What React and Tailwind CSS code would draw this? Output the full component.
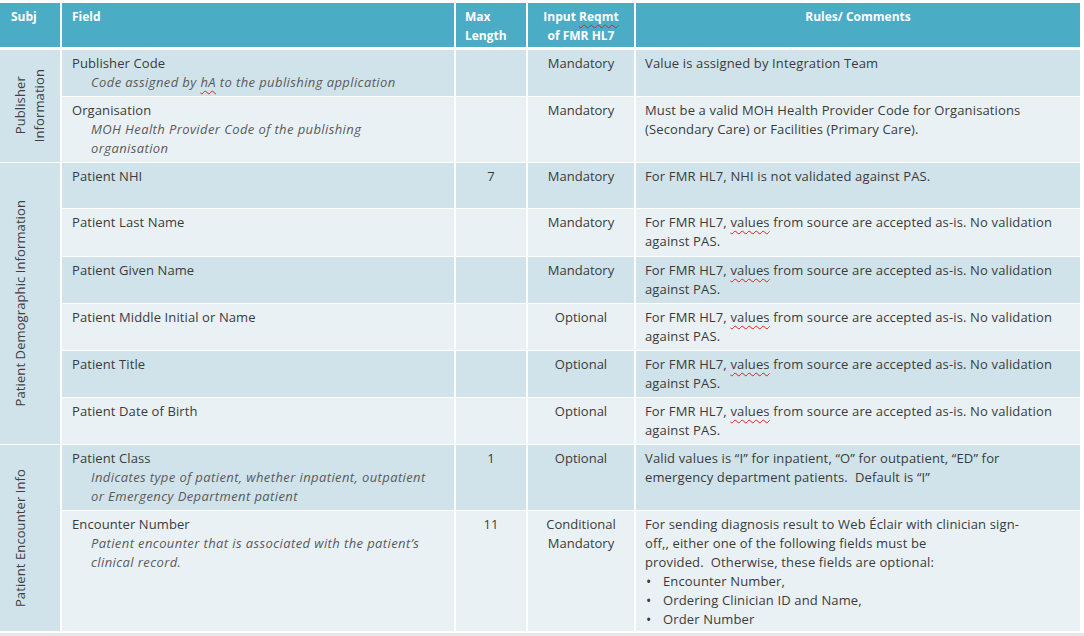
import React from "react";

const DARK = "bg-[#d0e3ea]";
const LIGHT = "bg-[#e9f1f5]";

const Squiggle = ({ children }) => (
  <span className="underline decoration-wavy decoration-[#e02020] decoration-[1px] underline-offset-[3px]">
    {children}
  </span>
);

const rules = (
  <>
    For FMR HL7, <Squiggle>values</Squiggle> from source are accepted as-is. No validation
    <br />
    against PAS.
  </>
);

const rows = [
  {
    field: "Publisher Code",
    desc: (
      <>
        Code assigned by <Squiggle>hA</Squiggle> to the publishing application
      </>
    ),
    max: "",
    req: "Mandatory",
    rules: "Value is assigned by Integration Team",
  },
  {
    field: "Organisation",
    desc: (
      <>
        MOH Health Provider Code of the publishing
        <br />
        organisation
      </>
    ),
    max: "",
    req: "Mandatory",
    rules: (
      <>
        Must be a valid MOH Health Provider Code for Organisations
        <br />
        (Secondary Care) or Facilities (Primary Care).
      </>
    ),
  },
  { field: "Patient NHI", max: "7", req: "Mandatory", rules: "For FMR HL7, NHI is not validated against PAS." },
  { field: "Patient Last Name", max: "", req: "Mandatory", rules },
  { field: "Patient Given Name", max: "", req: "Mandatory", rules },
  { field: "Patient Middle Initial or Name", max: "", req: "Optional", rules },
  { field: "Patient Title", max: "", req: "Optional", rules },
  { field: "Patient Date of Birth", max: "", req: "Optional", rules },
  {
    field: "Patient Class",
    desc: (
      <>
        Indicates type of patient, whether inpatient, outpatient
        <br />
        or Emergency Department patient
      </>
    ),
    max: "1",
    req: "Optional",
    rules: (
      <>
        Valid values is “I” for inpatient, “O” for outpatient, “ED” for
        <br />
        emergency department patients.&nbsp; Default is “I”
      </>
    ),
  },
  {
    field: "Encounter Number",
    desc: (
      <>
        Patient encounter that is associated with the patient’s
        <br />
        clinical record.
      </>
    ),
    max: "11",
    req: (
      <>
        Conditional
        <br />
        Mandatory
      </>
    ),
    rules: (
      <>
        For sending diagnosis result to Web Éclair with clinician sign-
        <br />
        off,, either one of the following fields must be
        <br />
        provided.&nbsp; Otherwise, these fields are optional:
        <ul className="pl-[1px]">
          {["Encounter Number,", "Ordering Clinician ID and Name,", "Order Number"].map((t) => (
            <li key={t} className="flex">
              <span className="w-[17px] shrink-0 text-[14px]">•</span>
              <span>{t}</span>
            </li>
          ))}
        </ul>
      </>
    ),
  },
];

const Subj = ({ span, rowStart, children }) => (
  <div
    className={`${DARK} ${span} ${rowStart} col-start-1 flex items-center justify-start pl-[11px] text-[#404040]`}
  >
    <div className="[writing-mode:vertical-rl] rotate-180 text-center leading-[19px] whitespace-nowrap tracking-[0.1px]">
      {children}
    </div>
  </div>
);

export default function App() {
  return (
    <div
      className="w-[1084px] h-[636px] bg-white overflow-hidden pt-[3px] text-[13px]"
      style={{ fontFamily: '"Open Sans", "Noto Sans", sans-serif' }}
    >
      <div className="w-[1080px]">
        <div className="grid grid-cols-[60px_392px_70px_106px_1fr] gap-x-[2px] h-[44px] text-white font-bold text-[12px] leading-[19px]">
          <div className="bg-[#4bacc6] pl-[11px] pt-[4px]">Subj</div>
          <div className="bg-[#4bacc6] pl-[10px] pt-[4px]">Field</div>
          <div className="bg-[#4bacc6] pl-[9px] pt-[4px]">
            Max
            <br />
            Length
          </div>
          <div className="bg-[#4bacc6] pt-[4px] text-center">
            Input <Squiggle>Reqmt</Squiggle>
            <br />
            of FMR HL7
          </div>
          <div className="bg-[#4bacc6] pt-[4px] text-center">Rules/ Comments</div>
        </div>

        <div className="mt-[3px] grid grid-cols-[60px_392px_70px_106px_1fr] grid-rows-[46px_65px_45px_47px_46px_46px_46px_46px_65px_120px] gap-x-[2px] gap-y-[1px] leading-[19px] text-[#3b3b3b]">
          <Subj span="row-span-2" rowStart="row-start-1">
            Publisher
            <br />
            Information
          </Subj>
          <Subj span="row-span-6" rowStart="row-start-3">
            Patient Demographic Information
          </Subj>
          <Subj span="row-span-2" rowStart="row-start-9">
            Patient Encounter Info
          </Subj>

          {rows.map((r, i) => {
            const bg = i % 2 === 0 ? DARK : LIGHT;
            return (
              <React.Fragment key={i}>
                <div className={`${bg} col-start-2 pl-[10px] pt-[4px] whitespace-nowrap tracking-[0.1px]`}>
                  <div>{r.field}</div>
                  {r.desc && (
                    <div className="pl-[19px] italic text-[#5a5a5a] tracking-[0.4px]">{r.desc}</div>
                  )}
                </div>
                <div className={`${bg} pt-[4px] text-center`}>{r.max}</div>
                <div className={`${bg} pt-[4px] text-center`}>{r.req}</div>
                <div className={`${bg} pl-[9px] pt-[4px] whitespace-nowrap tracking-[0.14px]`}>{r.rules}</div>
              </React.Fragment>
            );
          })}
        </div>
      </div>
      <div className="mt-[2px] h-[3px] bg-[#e6e6e6]" />
    </div>
  );
}
